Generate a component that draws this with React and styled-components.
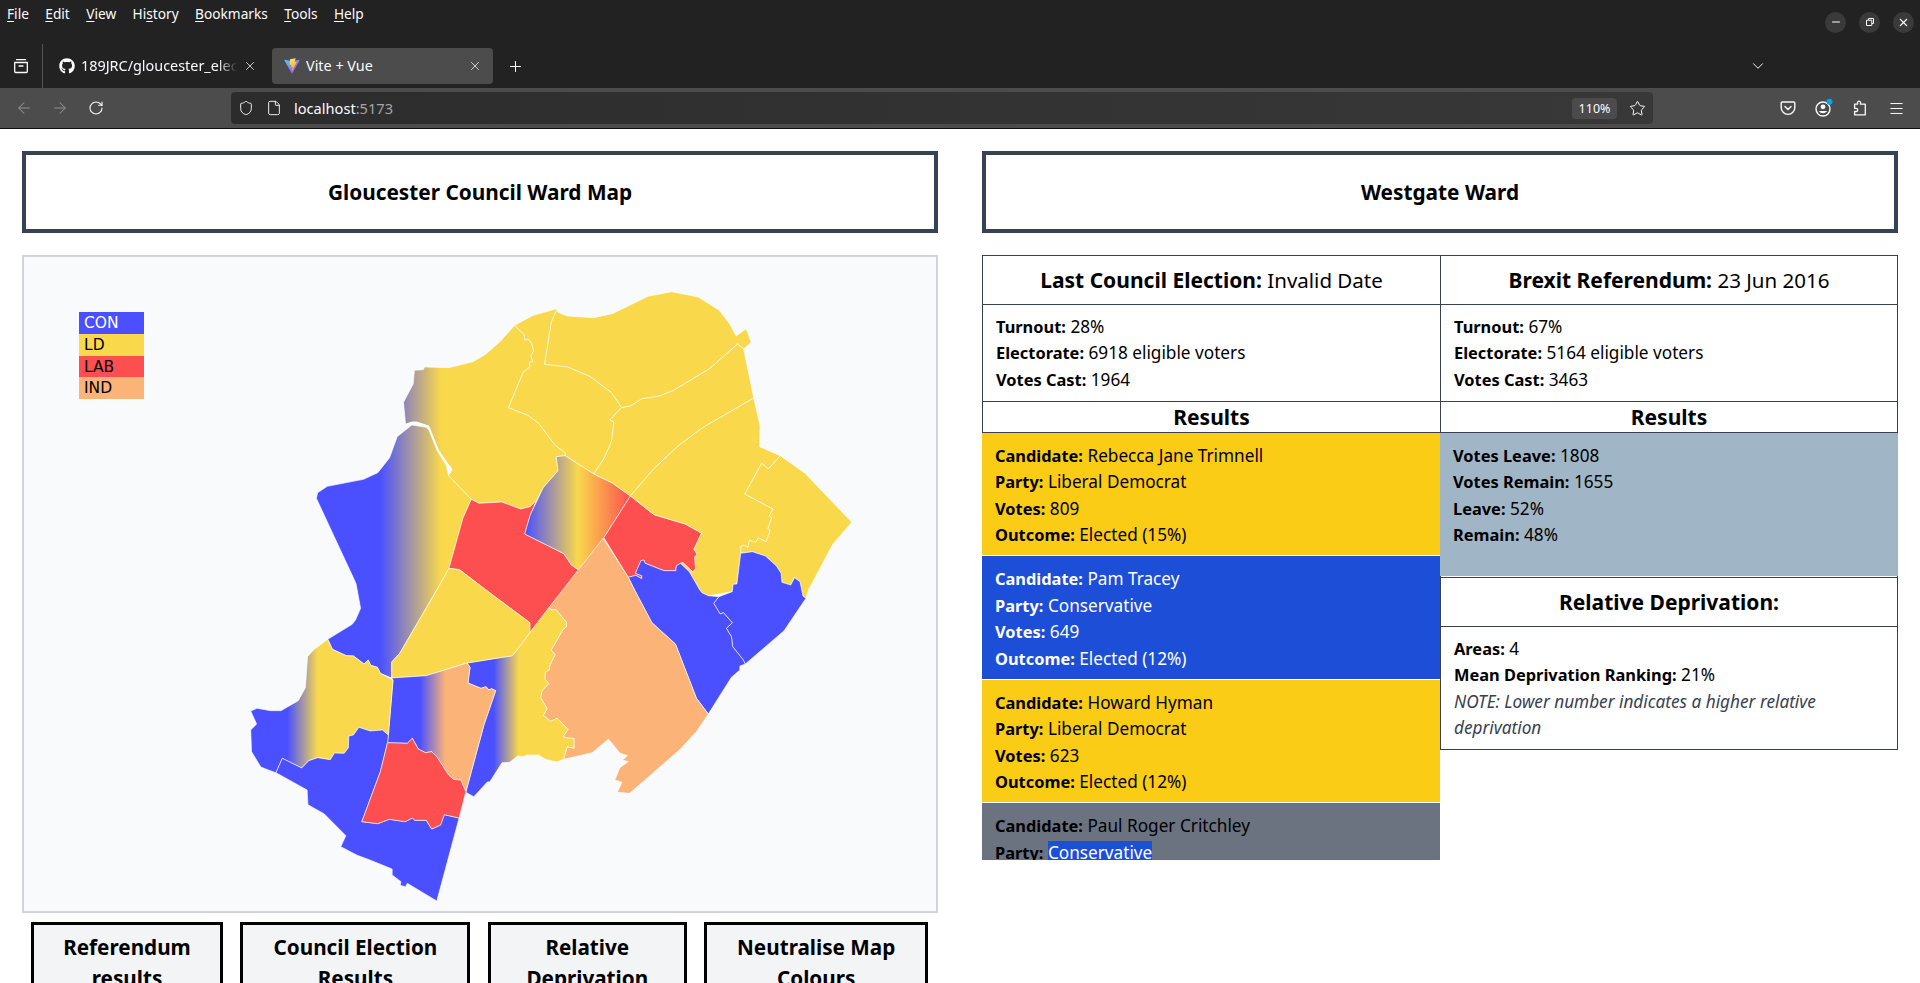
import React from "react";
import styled, { createGlobalStyle } from "styled-components";
import { ArrowLeft, ArrowRight, ChevronDown, File, Menu, Minus, Plus, RotateCw, Shield, Star, X } from "lucide-react";
import { FaGithub } from "react-icons/fa";

const CON = "#4a50ff";
const LD = "#f9d84c";
const LAB = "#fd4f50";
const IND = "#fbb377";

// ward outlines, traced from the map. x,y in a 1568x1920 sheet that is stretched over the map area
const wards = [
  { fill: LD, pts: "801,116 803,127 825,138 888,143 932,131 1017,79 1073,65 1136,81 1186,121 1211,162 1226,198 1250,176 1262,217 1244,237 1230,222 1163,296 1078,361 1045,378 1003,386 975,408 954,413 930,368 880,320 826,291 771,283 787,155" },
  { fill: LD, pts: "700,166 744,136 801,116 787,155 771,283 826,291 880,320 930,368 954,413 926,450 936,456 930,515 912,566 888,612 820,557 820,548 796,526 757,460 731,436 685,413 720,307 736,290 735,277 743,275 738,258 745,243 740,220 732,207 724,211 723,195" },
  { fill: "url(#conLd)", pts: "700,166 665,215 631,253 601,275 544,293 486,291 483,299 462,301 459,342 436,397 441,464 456,456 467,456 495,468 518,540 537,575 551,600 543,617 597,688 615,700 669,696 714,717 737,710 752,691 768,653 803,602 799,560 820,557 820,548 796,526 757,460 731,436 685,413 720,307 736,290 735,277 743,275 738,258 745,243 740,220 732,207 724,211 723,195" },
  { fill: "url(#conLd)", pts: "456,465 421,500 403,563 375,608 341,628 255,649 232,668 229,685 323,940 326,960 334,1015 322,1050 314,1063 256,1108 267,1138 300,1157 317,1158 342,1182 352,1170 358,1186 374,1192 381,1210 408,1224 408,1176 427,1150 515,960 544,895 577,745 597,688 543,617 537,585 518,545 497,480 490,472" },
  { fill: LAB, pts: "597,688 615,700 669,696 714,717 737,710 752,691 737,735 724,792 817,851 835,885 852,900 815,960 736,1088 736,1058 632,960 569,899 544,895 577,745" },
  { fill: "url(#conLdLab)", pts: "799,560 820,557 888,612 932,639 975,678 912,803 852,900 835,885 817,851 724,792 737,735 768,653 803,602" },
  { fill: LAB, pts: "975,678 1031,734 1105,762 1144,789 1126,838 1134,853 1128,860 1130,895 1124,907 1100,878 1094,880 1084,888 1083,902 1055,902 1010,880 1007,870 1000,872 987,910 1002,917 1002,926 988,916 970,922 912,803" },
  { fill: LD, pts: "954,413 975,408 1003,386 1045,378 1078,361 1163,296 1230,222 1244,237 1268,384 1148,472 1089,527 1030,597 975,678 932,639 888,612 912,566 930,515 936,456 926,450" },
  { fill: LD, pts: "1268,384 1283,467 1282,530 1331,557 1303,597 1287,580 1247,672 1314,717 1305,738 1311,742 1302,775 1307,783 1297,815 1279,804 1273,817 1258,811 1254,832 1245,825 1237,830 1237,850 1228,942 1219,943 1217,965 1160,977 1145,968 1140,960 1115,905 1094,880 1100,878 1124,907 1130,895 1128,860 1134,853 1126,838 1144,789 1105,762 1031,734 975,678 1030,597 1089,527 1148,472" },
  { fill: LD, pts: "1331,557 1390,610 1501,757 1456,822 1398,960 1392,985 1385,978 1378,935 1365,923 1356,945 1335,937 1333,910 1322,888 1296,858 1265,845 1237,850 1237,830 1245,825 1254,832 1258,811 1273,817 1279,804 1297,815 1307,783 1302,775 1311,742 1305,738 1314,717 1247,672 1287,580 1303,597" },
  { fill: CON, pts: "1237,850 1265,845 1296,858 1322,888 1333,910 1335,937 1356,945 1365,923 1378,935 1385,978 1392,985 1340,1082 1248,1182 1242,1168 1218,1130 1215,1100 1203,1075 1217,1058 1196,1028 1188,1032 1173,1000 1185,980 1217,965 1219,943 1228,942" },
  { fill: CON, pts: "970,922 988,916 1002,926 1002,917 987,910 1000,872 1007,870 1010,880 1055,902 1083,902 1084,888 1094,880 1115,905 1140,960 1145,968 1160,977 1185,980 1173,1000 1188,1032 1196,1028 1217,1058 1203,1075 1215,1100 1218,1130 1242,1168 1248,1182 1235,1188 1235,1200 1215,1222 1160,1332 1132,1285 1082,1122 1026,1058 985,960" },
  { fill: IND, pts: "910,805 970,922 985,960 1026,1058 1082,1122 1132,1285 1160,1332 1133,1383 1094,1437 973,1570 944,1567 955,1537 938,1530 950,1493 970,1475 956,1470 968,1457 950,1449 923,1407 884,1448 816,1468 825,1430 841,1435 841,1405 825,1404 815,1400 827,1378 801,1345 786,1354 768,1337 777,1316 762,1283 765,1262 781,1241 772,1227 773,1207 782,1200 784,1185 796,1154 787,1140 815,1078 823,1070 823,1057 798,1018 790,1020 780,1015" },
  { fill: "url(#conLdEast)", pts: "780,1015 790,1020 798,1018 823,1057 823,1070 815,1078 787,1140 796,1154 784,1185 782,1200 773,1207 772,1227 781,1241 765,1262 762,1283 777,1316 768,1337 786,1354 801,1345 827,1378 815,1400 825,1404 841,1405 841,1435 825,1430 816,1468 800,1476 773,1468 757,1455 730,1455 720,1460 707,1458 688,1477 670,1478 641,1535 635,1536 603,1580 584,1567 627,1365 655,1262 645,1256 639,1260 632,1250 620,1255 589,1239 594,1192 587,1179 695,1157 736,1088" },
  { fill: LD, pts: "544,895 569,899 632,960 736,1058 736,1088 695,1157 587,1179 490,1217 408,1224 408,1176 427,1150 515,960" },
  { fill: "url(#conInd)", pts: "408,1224 490,1217 587,1179 594,1192 589,1239 620,1255 632,1250 639,1260 645,1256 655,1262 627,1365 584,1565 572,1530 555,1528 543,1515 515,1460 503,1445 488,1448 471,1437 457,1405 445,1420 398,1418 400,1395 411,1230" },
  { fill: "url(#conLdWest)", pts: "256,1108 267,1138 300,1157 317,1158 342,1182 352,1170 358,1186 374,1192 381,1210 411,1230 400,1395 386,1380 357,1383 330,1372 317,1395 306,1398 305,1433 295,1450 272,1449 262,1469 232,1463 211,1472 194,1494 148,1465 133,1508 115,1500 97,1491 75,1445 73,1380 87,1362 73,1323 88,1315 120,1322 145,1322 186,1292 203,1253 208,1160 222,1140" },
  { fill: CON, pts: "148,1465 194,1494 211,1472 232,1463 262,1469 272,1449 295,1450 305,1433 306,1398 317,1395 330,1372 357,1383 386,1380 400,1395 398,1418 381,1505 337,1655 375,1661 402,1648 440,1655 457,1644 463,1651 490,1651 503,1677 524,1665 533,1634 568,1644 515,1893 445,1840 441,1850 428,1846 430,1835 409,1815 409,1797 352,1768 326,1756 287,1730 299,1697 248,1632 209,1604 207,1560 133,1508" },
  { fill: LAB, pts: "398,1418 445,1420 457,1405 471,1437 488,1448 503,1445 515,1460 543,1515 555,1528 572,1530 584,1565 568,1644 533,1634 524,1665 503,1677 490,1651 463,1651 457,1644 440,1655 402,1648 375,1661 337,1655 381,1505" },
];

const candidates = [
  { name: "Rebecca Jane Trimnell", party: "Liberal Democrat", votes: 809, outcome: "Elected (15%)", bg: "#facc15", color: "#000" },
  { name: "Pam Tracey", party: "Conservative", votes: 649, outcome: "Elected (12%)", bg: "#1d4ed8", color: "#fff" },
  { name: "Howard Hyman", party: "Liberal Democrat", votes: 623, outcome: "Elected (12%)", bg: "#facc15", color: "#000" },
];

const GlobalStyle = createGlobalStyle`
  html, body {
    margin: 0;
    height: 983px;
    overflow: hidden;
    background: #fff;
  }
  body {
    font-family: "Noto Sans", sans-serif;
    font-size: 17.2px;
    line-height: 26.4px;
    color: #000;
  }
  * { box-sizing: border-box; }
`;

const TitleRow = styled.div`
  display: flex;
  height: 44px;
  padding-right: 6px;
  background: #222;
  align-items: center;
`;

const MenuBar = styled.div`
  display: flex;
  flex: 1;
  align-self: flex-start;
  gap: 16.4px;
  padding: 4px 0 0 7px;
  font-size: 13.7px;
  line-height: 20px;
  color: #fbfbfe;
  u { text-underline-offset: 2px; }
`;

const WindowButton = styled.div`
  display: flex;
  width: 21px;
  height: 21px;
  margin-left: 13px;
  border-radius: 50%;
  background: #3a3a3a;
  color: #fff;
  align-items: center;
  justify-content: center;
`;

const TabRow = styled.div`
  display: flex;
  height: 44px;
  padding-right: 144px;
  background: #222;
  color: #fbfbfe;
  align-items: center;
`;

const ViewSlot = styled.div`
  display: flex;
  width: 43px;
  height: 44px;
  border-right: 1px solid #555;
  align-items: center;
  justify-content: center;
`;

const Tab = styled.div`
  display: flex;
  width: ${(p) => p.$width}px;
  height: 36px;
  margin-left: ${(p) => p.$offset}px;
  padding: 0 11px 0 ${(p) => p.$inset}px;
  border-radius: 4px;
  background: ${(p) => (p.$active ? "#4c4c4c" : "transparent")};
  font-size: 14.4px;
  align-items: center;
  gap: 6px;
`;

const TabTitle = styled.span`
  flex: 1;
  overflow: hidden;
  white-space: nowrap;
  ${(p) => p.$faded && "mask-image: linear-gradient(90deg, #000 88%, transparent);"}
`;

const IconSlot = styled.div`
  display: flex;
  width: ${(p) => p.$width || 36}px;
  height: 40px;
  color: ${(p) => p.$color || "#fbfbfe"};
  flex: none;
  align-items: center;
  justify-content: center;
`;

const Grow = styled.div`
  flex: 1;
`;

const Toolbar = styled.div`
  display: flex;
  height: 41px;
  padding: 0 6px;
  background: #4c4c4c;
  border-bottom: 1px solid #0c0c0d;
  align-items: center;
`;

const UrlBar = styled.div`
  display: flex;
  flex: 1;
  height: 32px;
  margin: 0 117px;
  padding-left: 7px;
  border-radius: 4px;
  background: linear-gradient(90deg, #2c2c2c, #383838);
  color: #fbfbfe;
  font-size: 14.6px;
  align-items: center;
`;

const Host = styled.span`
  flex: 1;
  span { color: #a5a5a5; }
`;

const ZoomChip = styled.span`
  width: 45px;
  height: 21px;
  margin-right: 4px;
  border-radius: 4px;
  background: #4b4b4b;
  font-size: 12.5px;
  line-height: 21px;
  text-align: center;
`;

const Page = styled.div`
  display: grid;
  grid-template-columns: 916px 916px;
  gap: 44px;
  padding: 22px;
`;

const Column = styled.div`
  display: flex;
  flex-direction: column;
`;

const TitleCard = styled.h1`
  display: flex;
  height: 82px;
  margin: 0 0 22px;
  border: 4px solid #374151;
  font-size: 20.8px;
  font-weight: 700;
  align-items: center;
  justify-content: center;
`;

const MapPanel = styled.div`
  position: relative;
  height: 658px;
  border: 2px solid #d1d5db;
  background: #f9fafb;
`;

const MapSvg = styled.svg`
  display: block;
  width: 100%;
  height: 100%;
`;

const Legend = styled.div`
  position: absolute;
  top: 55px;
  left: 55px;
  width: 65px;
  font-family: "DejaVu Sans", sans-serif;
  font-size: 15.5px;
`;

const LegendRow = styled.div`
  height: 21.8px;
  padding-left: 5px;
  background: ${(p) => p.$bg};
  color: ${(p) => p.$color || "#000"};
  line-height: 23px;
`;

const ButtonRow = styled.div`
  display: flex;
  margin-top: 9px;
  padding-left: 9px;
  gap: 17.4px;
`;

const MapButton = styled.button`
  width: ${(p) => p.$width}px;
  height: 82px;
  padding: 0 20px;
  border: 3px solid #000;
  background: #f3f4f6;
  color: #000;
  font-family: inherit;
  font-size: 20.7px;
  font-weight: 700;
  line-height: 30.8px;
  flex: none;
`;

const Columns = styled.div`
  display: grid;
  grid-template-columns: 458px 458px;
  align-items: start;
`;

const LeftTable = styled.div`
  height: 605px;
  overflow: hidden;
`;

const LeftCells = styled.div`
  border-left: 1px solid #374151;
`;

const RightTable = styled.div`
  border-left: 1px solid #374151;
  border-right: 1px solid #374151;
`;

const HeadCell = styled.div`
  display: flex;
  height: ${(p) => p.$height || 50}px;
  border-top: ${(p) => (p.$top ? "1px solid #374151" : 0)};
  border-bottom: 1px solid #374151;
  font-size: 20.5px;
  line-height: 30.8px;
  align-items: center;
  justify-content: center;
  white-space: pre;
  b { font-size: 21px; }
`;

const StatCell = styled.div`
  padding: 9px 13px 7.8px;
  border-bottom: 1px solid #374151;
`;

const Line = styled.div`
  font-style: ${(p) => (p.$note ? "italic" : "normal")};
  color: ${(p) => (p.$note ? "#374151" : "inherit")};
  b { font-size: 16.4px; }
`;

const ResultBlock = styled.div`
  height: ${(p) => p.$height || 123.4}px;
  margin: 0 ${(p) => (p.$flush ? "-1px" : 0)} 0 -1px;
  padding: 10px 13px 0;
  border-bottom: 1px solid ${(p) => (p.$flush ? "transparent" : "#fff")};
  background: ${(p) => p.$bg};
  background-clip: padding-box;
  color: ${(p) => p.$color};
`;

const LeftBlocks = styled.div`
  margin-left: 1px;
`;

const Selected = styled.span`
  background: #1d4ed8;
  color: #fff;
`;

function Stat({ label, children }) {
  return (
    <Line>
      <b>{label}:</b> {children}
    </Line>
  );
}

function ViteLogo() {
  return (
    <svg width="16" height="16" viewBox="0 0 410 404">
      <defs>
        <linearGradient id="viteA" x1="0" y1="0" x2="1" y2="1">
          <stop offset="0" stopColor="#41d1ff" />
          <stop offset="1" stopColor="#bd34fe" />
        </linearGradient>
        <linearGradient id="viteB" x1="0" y1="0" x2="0.4" y2="1">
          <stop offset="0" stopColor="#ffea83" />
          <stop offset="1" stopColor="#ffa800" />
        </linearGradient>
      </defs>
      <path fill="url(#viteA)" d="M399.641 59.525L215.643 388.545C211.844 395.338 202.084 395.378 198.228 388.618L10.582 59.556C6.38 52.19 12.68 43.267 21.028 44.759L205.223 77.682C206.398 77.892 207.601 77.89 208.776 77.676L389.119 44.806C397.439 43.289 403.768 52.143 399.641 59.525Z" />
      <path fill="url(#viteB)" d="M292.965 1.574L156.801 28.255C154.563 28.694 152.906 30.59 152.771 32.866L144.395 174.33C144.198 177.662 147.258 180.248 150.51 179.498L188.42 170.749C191.967 169.931 195.172 173.055 194.443 176.622L183.18 231.775C182.422 235.487 185.907 238.661 189.532 237.56L212.947 230.446C216.577 229.344 220.065 232.527 219.297 236.242L201.398 322.875C200.278 328.294 207.486 331.249 210.492 326.603L212.5 323.5L323.454 102.072C325.312 98.365 322.108 94.137 318.036 94.923L279.014 102.454C275.347 103.161 272.227 99.746 273.262 96.158L298.731 7.867C299.767 4.273 296.636 0.855 292.965 1.574Z" />
    </svg>
  );
}

function FirefoxView() {
  return (
    <svg width="16" height="16" viewBox="0 0 16 16" fill="none" stroke="currentColor" strokeWidth="1.3">
      <path d="M3.5 1.7h9M1.7 4.5h12.6v9a1 1 0 0 1-1 1H2.7a1 1 0 0 1-1-1zM6 8h4" strokeLinecap="round" />
    </svg>
  );
}

function Pocket() {
  return (
    <svg width="16" height="16" viewBox="0 0 16 16" fill="none" stroke="currentColor" strokeWidth="1.4">
      <path d="M2.2 2h11.6a1 1 0 0 1 1 1v4.4A6.9 6.9 0 0 1 8 14.4a6.9 6.9 0 0 1-6.8-7V3a1 1 0 0 1 1-1z" />
      <path d="M5 6.4l3 3 3-3" strokeLinecap="round" />
    </svg>
  );
}

function Account() {
  return (
    <svg width="20" height="20" viewBox="0 0 20 20">
      <circle cx="9" cy="11" r="7" fill="none" stroke="currentColor" strokeWidth="1.4" />
      <circle cx="9" cy="8.8" r="2.4" fill="currentColor" />
      <path d="M4.8 13h8.4a5 5 0 0 1-8.4 0z" fill="currentColor" />
      <circle cx="15.5" cy="3.8" r="3" fill="#00a6ed" />
    </svg>
  );
}

function Extensions() {
  return (
    <svg width="16" height="16" viewBox="0 0 16 16" fill="none" stroke="currentColor" strokeWidth="1.3" strokeLinejoin="round">
      <path d="M7 1.2a1.5 1.5 0 0 1 1.5 1.6v1.4h4.8v10.6H2.6v-3.3h1.5a1.6 1.6 0 0 0 0-3.2H2.6V4.2h2.9V2.8A1.5 1.5 0 0 1 7 1.2z" />
    </svg>
  );
}

function RestoreIcon() {
  return (
    <svg width="10" height="10" viewBox="0 0 10 10" fill="none" stroke="currentColor" strokeWidth="1">
      <path d="M1.5 3.2h5.3v5.3H1.5zM3.5 3V1.5h5v5H7" />
    </svg>
  );
}

function WardMap() {
  return (
    <MapSvg viewBox="24 257 912 654" preserveAspectRatio="none">
      <defs>
        <linearGradient id="conLd" gradientUnits="userSpaceOnUse" x1="380" y1="0" x2="525" y2="0">
          <stop offset="0" stopColor={CON} />
          <stop offset="1" stopColor={LD} />
        </linearGradient>
        <linearGradient id="conLdLab" gradientUnits="userSpaceOnUse" x1="725" y1="0" x2="975" y2="0">
          <stop offset="0" stopColor={CON} />
          <stop offset="0.5" stopColor={LD} />
          <stop offset="1" stopColor={LAB} />
        </linearGradient>
        <linearGradient id="conLdEast" gradientUnits="userSpaceOnUse" x1="650" y1="0" x2="710" y2="0">
          <stop offset="0" stopColor={CON} />
          <stop offset="1" stopColor={LD} />
        </linearGradient>
        <linearGradient id="conLdWest" gradientUnits="userSpaceOnUse" x1="160" y1="0" x2="232" y2="0">
          <stop offset="0" stopColor={CON} />
          <stop offset="1" stopColor={LD} />
        </linearGradient>
        <linearGradient id="conInd" gradientUnits="userSpaceOnUse" x1="475" y1="0" x2="535" y2="0">
          <stop offset="0" stopColor={CON} />
          <stop offset="1" stopColor={IND} />
        </linearGradient>
      </defs>
      <g transform="translate(220 270) scale(0.42092 0.33333)">
        {wards.map((w) => (
          <polygon
            key={w.pts}
            points={w.pts}
            fill={w.fill}
            stroke="#fff"
            strokeOpacity="0.6"
            strokeWidth="1"
            vectorEffect="non-scaling-stroke"
          />
        ))}
        <polyline
          points="441,464 456,458 467,458 495,470 518,542 537,577 551,600"
          fill="none"
          stroke="#fff"
          strokeWidth="2"
          vectorEffect="non-scaling-stroke"
        />
      </g>
    </MapSvg>
  );
}

function App() {
  return (
    <>
      <GlobalStyle />
      <TitleRow>
        <MenuBar>
          <span><u>F</u>ile</span>
          <span><u>E</u>dit</span>
          <span><u>V</u>iew</span>
          <span>Hi<u>s</u>tory</span>
          <span><u>B</u>ookmarks</span>
          <span><u>T</u>ools</span>
          <span><u>H</u>elp</span>
        </MenuBar>
        <WindowButton><Minus size={12} /></WindowButton>
        <WindowButton><RestoreIcon /></WindowButton>
        <WindowButton><X size={13} /></WindowButton>
      </TitleRow>
      <TabRow>
        <ViewSlot><FirefoxView /></ViewSlot>
        <Tab $width={225} $offset={0} $inset={16}>
          <FaGithub size={16} />
          <TabTitle $faded>189JRC/gloucester_election_map</TabTitle>
          <X size={14} strokeWidth={1.3} />
        </Tab>
        <Tab $active $width={221} $offset={4} $inset={12}>
          <ViteLogo />
          <TabTitle>Vite + Vue</TabTitle>
          <X size={14} strokeWidth={1.3} />
        </Tab>
        <IconSlot $width={44}><Plus size={17} strokeWidth={1.5} /></IconSlot>
        <Grow />
        <IconSlot><ChevronDown size={18} strokeWidth={1.3} /></IconSlot>
      </TabRow>
      <Toolbar>
        <IconSlot $color="#8f8f8f"><ArrowLeft size={18} strokeWidth={1.4} /></IconSlot>
        <IconSlot $color="#8f8f8f"><ArrowRight size={18} strokeWidth={1.4} /></IconSlot>
        <IconSlot><RotateCw size={16} strokeWidth={1.6} /></IconSlot>
        <UrlBar>
          <IconSlot $width={16}><Shield size={16} strokeWidth={1.4} /></IconSlot>
          <IconSlot $width={40}><File size={16} strokeWidth={1.4} /></IconSlot>
          <Host>localhost<span>:5173</span></Host>
          <ZoomChip>110%</ZoomChip>
          <IconSlot $width={32}><Star size={17} strokeWidth={1.4} /></IconSlot>
        </UrlBar>
        <IconSlot><Pocket /></IconSlot>
        <IconSlot><Account /></IconSlot>
        <IconSlot><Extensions /></IconSlot>
        <IconSlot><Menu size={17} strokeWidth={1.4} /></IconSlot>
      </Toolbar>
      <Page>
        <Column>
          <TitleCard>Gloucester Council Ward Map</TitleCard>
          <MapPanel>
            <WardMap />
            <Legend>
              <LegendRow $bg={CON} $color="#fff">CON</LegendRow>
              <LegendRow $bg={LD}>LD</LegendRow>
              <LegendRow $bg={LAB}>LAB</LegendRow>
              <LegendRow $bg={IND}>IND</LegendRow>
            </Legend>
          </MapPanel>
          <ButtonRow>
            <MapButton $width={192}>Referendum results</MapButton>
            <MapButton $width={230}>Council Election Results</MapButton>
            <MapButton $width={199}>Relative Deprivation</MapButton>
            <MapButton $width={224}>Neutralise Map Colours</MapButton>
          </ButtonRow>
        </Column>
        <Column>
          <TitleCard>Westgate Ward</TitleCard>
          <Columns>
            <LeftTable>
              <LeftCells>
                <HeadCell $top><b>Last Council Election: </b>Invalid Date</HeadCell>
                <StatCell>
                  <Stat label="Turnout">28%</Stat>
                  <Stat label="Electorate">6918 eligible voters</Stat>
                  <Stat label="Votes Cast">1964</Stat>
                </StatCell>
                <HeadCell $height={31}><b>Results</b></HeadCell>
              </LeftCells>
              <LeftBlocks>
                {candidates.map((c) => (
                  <ResultBlock key={c.name} $bg={c.bg} $color={c.color}>
                    <Stat label="Candidate">{c.name}</Stat>
                    <Stat label="Party">{c.party}</Stat>
                    <Stat label="Votes">{c.votes}</Stat>
                    <Stat label="Outcome">{c.outcome}</Stat>
                  </ResultBlock>
                ))}
                <ResultBlock $bg="#6b7280" $color="#000">
                  <Stat label="Candidate">Paul Roger Critchley</Stat>
                  <Stat label="Party"><Selected>Conservative</Selected></Stat>
                </ResultBlock>
              </LeftBlocks>
            </LeftTable>
            <RightTable>
              <HeadCell $top><b>Brexit Referendum: </b>23 Jun 2016</HeadCell>
              <StatCell>
                <Stat label="Turnout">67%</Stat>
                <Stat label="Electorate">5164 eligible voters</Stat>
                <Stat label="Votes Cast">3463</Stat>
              </StatCell>
              <HeadCell $height={31}><b>Results</b></HeadCell>
              <ResultBlock $flush $height={144} $bg="#a0b6c7" $color="#000">
                <Stat label="Votes Leave">1808</Stat>
                <Stat label="Votes Remain">1655</Stat>
                <Stat label="Leave">52%</Stat>
                <Stat label="Remain">48%</Stat>
              </ResultBlock>
              <HeadCell $top><b>Relative Deprivation:</b></HeadCell>
              <StatCell>
                <Stat label="Areas">4</Stat>
                <Stat label="Mean Deprivation Ranking">21%</Stat>
                <Line $note>NOTE: Lower number indicates a higher relative deprivation</Line>
              </StatCell>
            </RightTable>
          </Columns>
        </Column>
      </Page>
    </>
  );
}

export default App;
